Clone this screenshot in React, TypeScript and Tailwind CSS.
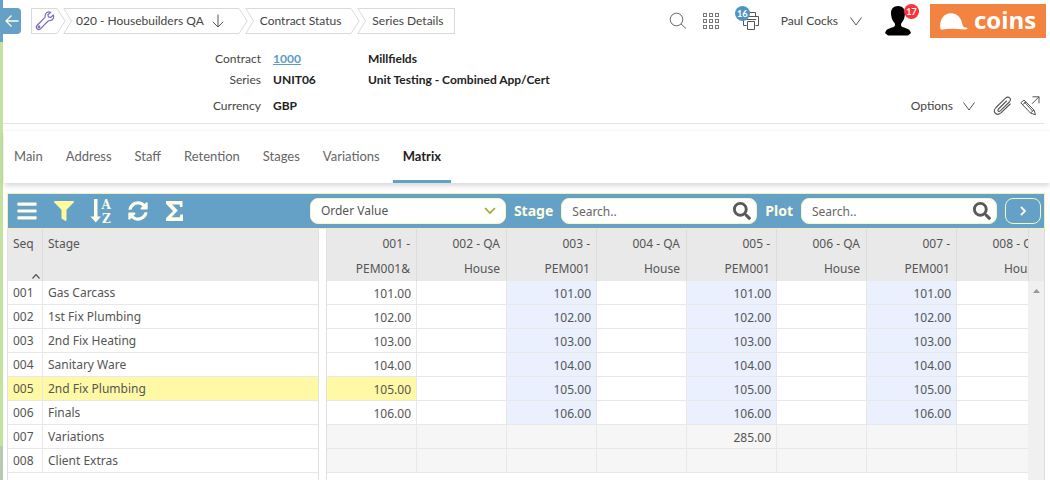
import React from "react";
import { FaBars, FaFilter, FaSearch, FaSyncAlt } from "react-icons/fa";

const stages = [
  { seq: "001", name: "Gas Carcass", value: "101.00" },
  { seq: "002", name: "1st Fix Plumbing", value: "102.00" },
  { seq: "003", name: "2nd Fix Heating", value: "103.00" },
  { seq: "004", name: "Sanitary Ware", value: "104.00" },
  { seq: "005", name: "2nd Fix Plumbing", value: "105.00" },
  { seq: "006", name: "Finals", value: "106.00" },
  { seq: "007", name: "Variations", value: "" },
  { seq: "008", name: "Client Extras", value: "" },
];

const plots = [
  ["001 -", "PEM001&"],
  ["002 - QA", "House"],
  ["003 -", "PEM001"],
  ["004 - QA", "House"],
  ["005 -", "PEM001"],
  ["006 - QA", "House"],
  ["007 -", "PEM001"],
  ["008 - QA", "House"],
];

const tabs = ["Main", "Address", "Staff", "Retention", "Stages", "Variations", "Matrix"];

function cellValue(row: number, col: number) {
  if (row === 6 && col === 4) return "285.00";
  return col % 2 === 0 ? stages[row].value : "";
}

function cellColour(row: number, col: number) {
  if (row > 5) return "bg-[#f6f6f6]";
  if (row === 4 && col === 0) return "bg-[#fff9a6]";
  if (col > 0 && col % 2 === 0) return "bg-[#eaf0fe]";
  return "bg-white";
}

function Crumb({ first, last, className = "", children }: {
  first?: boolean;
  last?: boolean;
  className?: string;
  children: React.ReactNode;
}) {
  return (
    <li className={`flex h-[26px] ${first ? "" : "-ml-[3px]"}`}>
      {!first && (
        <svg className="h-[26px] w-[9px]" viewBox="0 0 9 26" fill="none" stroke="#d9d9d9" aria-hidden="true">
          <path d="M9 .5H.8L8.5 13 .8 25.5H9" />
        </svg>
      )}
      <div
        className={`flex items-center border-y border-[#d9d9d9] ${first ? "border-l" : ""} ${last ? "border-r" : ""} ${className}`}
      >
        {children}
      </div>
      {!last && (
        <svg className="h-[26px] w-[9px]" viewBox="0 0 9 26" fill="none" stroke="#d9d9d9" aria-hidden="true">
          <path d="M0 .5 8.2 13 0 25.5" />
        </svg>
      )}
    </li>
  );
}

function ChevronV() {
  return (
    <svg className="h-[9px] w-3" viewBox="0 0 12 9" fill="none" stroke="#555" aria-hidden="true">
      <path d="M.5.5 6 8 11.5.5" />
    </svg>
  );
}

function SearchBox({ id, label }: { id: string; label: string }) {
  return (
    <>
      <label htmlFor={id} className="text-sm font-bold text-[#fffde0]">{label}</label>
      <div className="relative w-[196px]">
        <input
          id={id}
          placeholder="Search.."
          className="block h-[26px] w-full rounded-lg border border-[#f5f7c0] bg-white pr-8 pl-2.5 text-xs text-[#555] placeholder:text-[#666]"
        />
        <button aria-label={`Search ${label}`} className="absolute top-1 right-1.5 text-[#5a5a55]">
          <FaSearch size={18} />
        </button>
      </div>
    </>
  );
}

function TopBar() {
  return (
    <header className="flex h-[42px] items-center pr-1">
      <button aria-label="Back" className="flex h-[26px] w-[18px] items-center justify-center rounded-r bg-[#65a1c6]">
        <svg className="h-3.5 w-3.5" viewBox="0 0 14 14" fill="none" stroke="#fffde0" strokeWidth="1.3" aria-hidden="true">
          <path d="M13.5 7H1.5M6.5 1.5 1 7l5.500 5.500" />
        </svg>
      </button>
      <nav aria-label="Breadcrumb" className="ml-2.5">
        <ol className="flex">
          <Crumb first className="pr-0.5 pl-[3px]">
            <a href="#tools" aria-label="Tools">
              <svg className="h-5 w-5" viewBox="0 0 20 20" fill="none" stroke="#8169b8" strokeWidth="1.2" strokeLinejoin="round" aria-hidden="true">
                <path d="M15.800 1.300c-2-.8-4.300-.2-5.200 1.700-.7 1.400-.4 2.700-.6 3.300-.3.8-6.800 6.800-8 8.200-1.900 2.300 1 5.200 3.400 3.400 1.300-1 7-7.600 8-8 1-.3 2.600 0 3.900-1.200 1.400-1.300 1.700-3.100 1.100-4.700l-2.700 2.500-2.300-.6-.5-2.200z" />
                <circle cx="4" cy="16" r=".8" />
              </svg>
            </a>
          </Crumb>
          <Crumb className="gap-2 pr-[15px] pl-1">
            <a href="#company">020 - Housebuilders QA</a>
            <svg className="h-3.5 w-3" viewBox="0 0 12 14" fill="none" stroke="#555" aria-hidden="true">
              <path d="M6 .5v12.500M.8 7.800 6 13l5.200-5.200" />
            </svg>
          </Crumb>
          <Crumb className="pr-2.5 pl-1.5"><a href="#contract">Contract Status</a></Crumb>
          <Crumb last className="pr-2.5 pl-1.5"><a href="#series">Series Details</a></Crumb>
        </ol>
      </nav>

      <div className="ml-auto flex items-center">
        <button aria-label="Search">
          <svg className="h-[18px] w-[18px]" viewBox="0 0 18 18" fill="none" stroke="#666" aria-hidden="true">
            <circle cx="7.500" cy="7.500" r="6.300" />
            <path d="m12 12 5 4.500" />
          </svg>
        </button>
        <button aria-label="Apps" className="ml-4">
          <svg className="h-4 w-4" viewBox="0 0 16 16" fill="none" stroke="#777" aria-hidden="true">
            {[0.5, 6.5, 12.5].map((y) =>
              [0.5, 6.5, 12.5].map((x) => <rect key={`${x}-${y}`} x={x} y={y} width="3" height="3" />)
            )}
          </svg>
        </button>
        <button aria-label="Print queue, 16 items" className="relative ml-6 block">
          <svg className="h-[18px] w-4" viewBox="0 0 16 18" fill="none" stroke="#555" aria-hidden="true">
            <path d="M3.500 4.500v-4h9v4M3.500 13.500h-3v-9h15v9h-3M4.500 9.500h7v8h-7zM3 7.500h10" />
          </svg>
          <span className="absolute -top-1.5 -left-2 flex h-[15px] w-[15px] items-center justify-center rounded-full bg-[#4f95c3] text-[9px] font-bold text-white">16</span>
        </button>
        <button className="ml-[22px] flex items-center gap-3">
          Paul Cocks
          <ChevronV />
        </button>
        <button aria-label="Profile, 17 notifications" className="relative ml-[23px] block">
          <svg className="h-[30px] w-[26px]" viewBox="0 0 26 30" fill="#000" aria-hidden="true">
            <path d="M13 0C8.500 0 5.800 3 6 7.500c.1 3.500 1.200 7 3.500 9.500 1 1.200.6 3.200-.5 3.800C6.500 22 2 22.500.8 25.200L0 27l3 2.500h20L26 27l-.8-1.800C24 22.500 19.500 22 17 20.800c-1.100-.6-1.500-2.600-.5-3.800 2.300-2.500 3.400-6 3.500-9.500C20.200 3 17.500 0 13 0z" />
          </svg>
          <span className="absolute -top-0.5 -right-2 flex h-[15px] w-[15px] items-center justify-center rounded-full bg-[#fb3338] text-[9px] font-bold text-white">17</span>
        </button>
        <a href="#home" className="ml-[19px] flex h-[34px] w-[116px] items-center gap-1.5 bg-[#f38340] pl-2.5 text-white">
          <svg className="h-[17px] w-7 shrink-0" viewBox="0 0 28 17" fill="#fff" aria-hidden="true">
            <path d="M.3 15.500C-.8 8 3 .5 10.500.3 17.500.2 21.500 5 22.500 12c.2 1.500 2 2.500 5.500 3.200-1.500 1.300-3.500 1.300-6 1.100-6-.8-13-.9-20 .3-1 .2-1.600-.2-1.700-1.100z" />
          </svg>
          <span className="pb-0.5 font-['Open_Sans',sans-serif] text-2xl leading-none font-bold">coins</span>
        </a>
      </div>
    </header>
  );
}

function Details() {
  return (
    <section className="mr-1.5 flex border-b border-[#e3e3e3] pt-1.5 pb-[7px]">
      <dl className="grid grid-cols-[258px_95px_auto] text-[#222]">
        <dt className="text-right leading-[21px] text-[#444]">Contract</dt>
        <dd className="pl-3 leading-[21px] font-bold"><a href="#1000" className="text-[#5b9bc8] underline">1000</a></dd>
        <dd className="pl-3 leading-[21px] font-bold">Millfields</dd>
        <dt className="text-right leading-[21px] text-[#444]">Series</dt>
        <dd className="pl-3 leading-[21px] font-bold">UNIT06</dd>
        <dd className="pl-3 leading-[21px] font-bold">Unit Testing - Combined App/Cert</dd>
        <dt className="pt-[5px] text-right leading-[21px] text-[#444]">Currency</dt>
        <dd className="pt-[5px] pl-3 leading-[21px] font-bold">GBP</dd>
      </dl>
      <div className="ml-auto flex items-center self-end pr-1">
        <button className="flex items-center gap-2.5">
          Options
          <ChevronV />
        </button>
        <button aria-label="Attachments" className="ml-[18px]">
          <svg className="h-5 w-5" viewBox="0 0 20 20" fill="none" stroke="#555" strokeWidth="1.100" strokeLinecap="round" aria-hidden="true">
            <path d="m13.500 5-8 8c-1.400 1.600.3 3.200 1.800 1.800l9-8.800c3-3.400-.8-6.400-3.800-3.800L3 11.500c-4.200 4.600 1 9 5.200 5.200l9-8.700" />
          </svg>
        </button>
        <button aria-label="Edit in new window" className="ml-[7px]">
          <svg className="h-5 w-5" viewBox="0 0 20 20" fill="none" stroke="#555" aria-hidden="true">
            <path d="M.8 6.800 4 4l10 10 1.500 4.800-5-1.800zM2.800 8.500 6 6M4.200 5.800l8.300 9.200M10.500 17l3.500-3M12.500.8H19v6.500M19 .8l-7 7" />
          </svg>
        </button>
      </div>
    </section>
  );
}

function Toolbar() {
  return (
    <div className="flex h-9 items-center gap-2 border border-[#eef2b4] bg-[#65a1c6] pr-[3px] pl-2">
      <div className="flex items-center text-[#fffde8]">
        <button aria-label="Menu"><FaBars size={22} /></button>
        <button aria-label="Filter" className="ml-4 text-[#fff9a0]"><FaFilter size={20} /></button>
        <button aria-label="Sort alphabetically" className="ml-4">
          <svg className="h-8 w-6" viewBox="0 0 24 32" fill="currentColor" aria-hidden="true">
            <path d="M4 4h3.500v17.500H11L5.800 27.500.5 21.500H4z" />
            <text x="11.500" y="14" fontFamily="DejaVu Serif" fontWeight="bold" fontSize="12">A</text>
            <text x="12" y="28" fontFamily="DejaVu Serif" fontWeight="bold" fontSize="12">Z</text>
          </svg>
        </button>
        <button aria-label="Refresh" className="ml-3.5"><FaSyncAlt size={20} /></button>
        <button aria-label="Totals" className="ml-[18px]">
          <svg className="h-5 w-[17px]" viewBox="0 0 17 20" fill="currentColor" aria-hidden="true">
            <path d="M0 0h16.500v6h-2.300l-.8-2.500H6.200l5.600 6-6.300 6.800h8.200l.8-2.800H17V20H0v-2.700L7 10 0 2.700z" />
          </svg>
        </button>
      </div>
      <div className="relative ml-auto w-[196px]">
        <select aria-label="Value shown" className="block h-[26px] w-full appearance-none rounded-lg border border-[#f5f7c0] bg-white pl-2.5 text-xs text-[#555]">
          <option>Order Value</option>
        </select>
        <svg className="pointer-events-none absolute top-[9px] right-2.5 h-2 w-3" viewBox="0 0 12 8" fill="none" stroke="#a3a42c" strokeWidth="1.600" aria-hidden="true">
          <path d="m1 1 5 5 5-5" />
        </svg>
      </div>
      <SearchBox id="stage-search" label="Stage" />
      <SearchBox id="plot-search" label="Plot" />
      <button aria-label="Next plots" className="flex h-[26px] w-9 items-center justify-center rounded-lg border border-[#f5f7c0]">
        <svg className="h-2.5 w-1.5" viewBox="0 0 6 10" fill="none" stroke="#fffde8" strokeWidth="1.800" aria-hidden="true">
          <path d="m1 1 4 4-4 4" />
        </svg>
      </button>
    </div>
  );
}

function Matrix() {
  return (
    <div className="flex min-h-0 flex-1 text-[#555]">
      <div className="w-[312px] shrink-0 border-x border-[#e0e0e0]">
        <table className="w-full table-fixed border-separate border-spacing-0 text-left">
          <colgroup><col className="w-[35px]" /><col /></colgroup>
          <thead>
            <tr className="h-[52px] bg-[#e9e9e9] align-top">
              <th scope="col" className="relative border-r border-[#dcdcdc] pt-[5px] pl-[5px] leading-5 font-normal">
                Seq
                <svg className="absolute right-0.5 bottom-0.5 h-[5px] w-2" viewBox="0 0 8 5" fill="none" stroke="#555" strokeWidth="1.200" aria-hidden="true">
                  <path d="m.5 4.500 3.500-4 3.500 4" />
                </svg>
              </th>
              <th scope="col" className="pt-[5px] pl-[5px] leading-5 font-normal">Stage</th>
            </tr>
          </thead>
          <tbody>
            {stages.map((s) => (
              <tr key={s.seq} className={s.seq === "005" ? "h-6 bg-[#fff9a6]" : "h-6 bg-white"}>
                <td className="border-r border-b border-[#e8e8e8] pl-[5px]">{s.seq}</td>
                <td className="border-b border-[#e8e8e8] pl-[5px]">{s.name}</td>
              </tr>
            ))}
          </tbody>
        </table>
      </div>
      <div className="ml-[7px] min-w-0 flex-1 overflow-hidden border-l border-[#e0e0e0]">
        <table className="w-[720px] table-fixed border-separate border-spacing-0 text-right">
          <thead>
            <tr className="h-[52px] bg-[#e9e9e9]">
              {plots.map(([top, bottom]) => (
                <th key={top} scope="col" className="border-r border-[#dcdcdc] pt-0.5 pr-1.5 leading-[25px] font-normal">
                  {top}<br />{bottom}
                </th>
              ))}
            </tr>
          </thead>
          <tbody>
            {stages.map((s, row) => (
              <tr key={s.seq} className="h-6">
                {plots.map(([top], col) => (
                  <td key={top} className={`border-r border-b border-[#e8e8e8] pt-0.5 pr-[5px] ${cellColour(row, col)}`}>
                    {cellValue(row, col)}
                  </td>
                ))}
              </tr>
            ))}
          </tbody>
        </table>
      </div>
      <div className="flex w-[17px] shrink-0 flex-col border-r border-[#dcdcdc] bg-[#f0f0f0]">
        <div className="h-[52px] border-l border-[#dcdcdc] bg-[#e9e9e9]" />
        <svg className="mx-auto mt-2 h-1 w-[7px]" viewBox="0 0 7 4" fill="#999" aria-hidden="true">
          <path d="M3.500 0 7 4H0z" />
        </svg>
      </div>
    </div>
  );
}

export default function App() {
  return (
    <div className="flex h-screen overflow-hidden bg-white font-[Lato,sans-serif] text-xs text-[#444]">
      <div className="flex w-[3px] shrink-0 flex-col">
        <div className="h-[42px] bg-[#65a1c6]" />
        <div className="flex-1 bg-[#c3e2a0]" />
        <div className="h-[34px] bg-[#b9c9b0]" />
      </div>
      <main className="flex min-w-0 flex-1 flex-col">
        <TopBar />
        <Details />
        <nav aria-label="Series sections" className="mt-1.5 ml-px flex h-[53px] shrink-0 border-t border-[#f7f7f7] text-[13px] shadow-[0_3px_5px_rgba(0,0,0,0.15)]">
          {tabs.map((tab) => (
            <a
              key={tab}
              href={`#${tab.toLowerCase()}`}
              className={
                tab === "Matrix"
                  ? "flex items-center border-b-[3px] border-[#65a1c6] px-2.5 pt-0.5 font-bold text-[#222]"
                  : "mr-[3px] flex items-center border-b-[3px] border-transparent px-2.5 pt-0.5 text-[#666]"
              }
            >
              {tab}
            </a>
          ))}
        </nav>
        <div className="mt-2.5 mr-[5px] ml-1 flex min-h-0 flex-1 flex-col font-['Noto_Sans',sans-serif] text-xs">
          <Toolbar />
          <Matrix />
        </div>
      </main>
    </div>
  );
}
